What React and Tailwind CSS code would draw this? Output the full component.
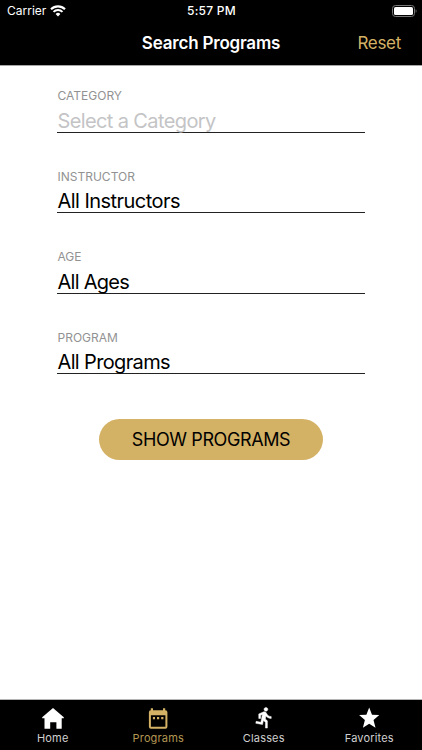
import React from "react";

const fields = [
  { label: "CATEGORY", value: "Select a Category", placeholder: true, text: "leading-[34px] tracking-[-0.62px]" },
  { label: "INSTRUCTOR", value: "All Instructors", text: "leading-[33px] tracking-[-0.54px]" },
  { label: "AGE", value: "All Ages", text: "leading-[34px] tracking-[-0.72px]" },
  { label: "PROGRAM", value: "All Programs", text: "leading-[33px] tracking-[-0.64px]" },
];

function WifiIcon() {
  return (
    <svg width="16" height="12" viewBox="0 0 16 12" fill="none">
      <path d="M1 4.2a10 10 0 0 1 14 0" stroke="white" strokeWidth="2.1" />
      <path d="M3.5 6.9a6.4 6.4 0 0 1 9 0" stroke="white" strokeWidth="2" />
      <path d="M8 11.4 5.6 9a3.4 3.4 0 0 1 4.8 0z" fill="white" />
    </svg>
  );
}

function BatteryIcon() {
  return (
    <svg width="26" height="12" viewBox="0 0 26 12" fill="none">
      <rect x="0.5" y="0.5" width="22" height="11" rx="3" stroke="#777" />
      <rect x="2" y="2" width="19" height="8" rx="1.6" fill="white" />
      <path d="M23.7 4.2c1.1.4 1.1 3.2 0 3.6z" fill="#777" />
    </svg>
  );
}

function HomeIcon() {
  return (
    <svg width="24" height="24" viewBox="0 0 24 24" fill="currentColor">
      <path d="M12 1.1 1.2 10.2v1h21.6v-1z" />
      <path d="M3.5 11h17.2v10.8h-5.3v-6.5H9.2v6.5H3.5z" />
    </svg>
  );
}

function CalendarIcon() {
  return (
    <svg width="24" height="24" viewBox="0 0 24 24" fill="currentColor">
      <path
        fillRule="evenodd"
        d="M4.8 1.2H7v2h10v-2h2.200v2h.2a2 2 0 0 1 2 2v14.600a2 2 0 0 1-2 2H4.900a2 2 0 0 1-2-2V5.200a2 2 0 0 1 1.900-2zM4.900 8.300v11.500h14.500V8.300z"
      />
      <path d="M6.900 10.100H9v2.200H6.900zM11 10.100h2.200v2.200H11zM15.200 10.100h2.200v2.200h-2.200z" />
    </svg>
  );
}

function RunIcon() {
  return (
    <svg
      className="mb-[3px] ml-[2px]"
      width="23"
      height="23"
      viewBox="0 0 24 24"
      fill="currentColor"
      stroke="currentColor"
      strokeWidth="0.5"
    >
      <path d="M13.5 5.500c1.100 0 2-.9 2-2s-.9-2-2-2-2 .9-2 2 .9 2 2 2zM9.900 19.400l1-4.400 2.100 2v6h2v-7.500l-2.100-2 .6-3c1.300 1.500 3.300 2.500 5.500 2.500v-2c-1.900 0-3.500-1-4.300-2.400l-1-1.600c-.4-.6-1-1-1.700-1-.3 0-.5.1-.8.1L6 8.300V13h2V9.600l1.800-.7-1.600 8.100-4.900-1-.4 2z" />
    </svg>
  );
}

function StarIcon() {
  return (
    <svg width="24" height="24" viewBox="0 0 24 24" fill="currentColor">
      <path d="m12.200.6 2.800 7.100 7.300.4-5.800 5 2 7.700-6.300-4.100-6.300 4.100 2-7.700-5.800-5 7.300-.4z" />
    </svg>
  );
}

const tabs = [
  { name: "Home", icon: <HomeIcon /> },
  { name: "Programs", icon: <CalendarIcon />, active: true },
  { name: "Classes", icon: <RunIcon /> },
  { name: "Favorites", icon: <StarIcon /> },
];

export default function App() {
  return (
    <div className="flex h-[750px] w-[422px] flex-col bg-white font-['Inter',sans-serif]">
      <header className="h-[65px] shrink-0 bg-black text-white">
        <div className="grid h-[22px] grid-cols-3 items-center pl-[5px] pr-1 text-[12px]">
          <div className="flex items-center gap-1 pl-[2px]">
            <span>Carrier</span>
            <WifiIcon />
          </div>
          <span className="text-center font-medium tracking-[0.25px]">5:57 PM</span>
          <div className="flex justify-end">
            <BatteryIcon />
          </div>
        </div>
        <div className="grid h-[43px] grid-cols-[100px_1fr_100px] items-center">
          <h1 className="col-start-2 text-center text-[17px] font-semibold tracking-[-0.2px]">
            Search Programs
          </h1>
          <button className="pr-[21px] text-right text-[17px] tracking-[-0.3px] text-[#d4b265]">
            Reset
          </button>
        </div>
      </header>

      <main className="flex flex-1 flex-col items-center border-t border-[#a6a6a6] pt-[22px]">
        <div className="flex w-[308px] flex-col gap-[36px]">
          {fields.map((f) => (
            <div key={f.label} className="h-[44.5px] border-b border-[#222]">
              <div className="h-4 pl-[0.5px] text-[12px] leading-4 text-[#929292]">
                {f.label}
              </div>
              <div
                className={`pl-[0.5px] text-[20px] ${f.text} ${
                  f.placeholder ? "text-[#c4c4c6]" : "text-black"
                }`}
              >
                {f.value}
              </div>
            </div>
          ))}
        </div>
        <button className="mt-[45px] h-[41px] w-[224px] rounded-full bg-[#d4b265] text-[18px] tracking-[-0.4px] text-black">
          SHOW PROGRAMS
        </button>
      </main>

      <nav className="grid h-[51px] shrink-0 grid-cols-4 border-t border-[#b5b5b5] bg-black">
        {tabs.map((t) => (
          <button
            key={t.name}
            className={`flex flex-col items-center pt-[7px] ${t.active ? "text-[#d4b265]" : "text-white"}`}
          >
            <span className="flex h-6 items-center">{t.icon}</span>
            <span
              className={`text-[11px] leading-[15px] tracking-[0.15px] ${
                t.active ? "text-[#b39652]" : "text-[#d0d0d0]"
              }`}
            >
              {t.name}
            </span>
          </button>
        ))}
      </nav>
    </div>
  );
}
